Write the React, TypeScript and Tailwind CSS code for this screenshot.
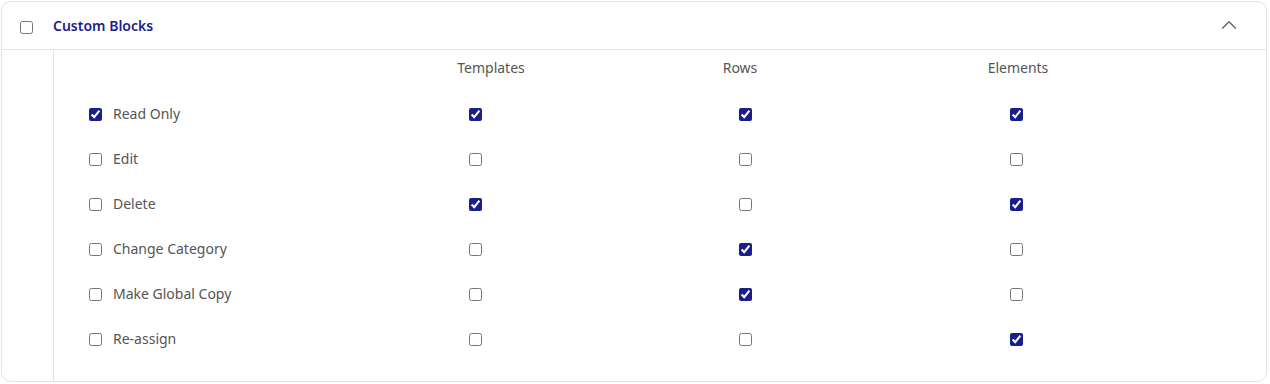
import { ChevronUp } from "lucide-react";

const columns = ["Templates", "Rows", "Elements"];

const permissions: { label: string; checked: boolean; values: boolean[] }[] = [
	{ label: "Read Only", checked: true, values: [true, true, true] },
	{ label: "Edit", checked: false, values: [false, false, false] },
	{ label: "Delete", checked: false, values: [true, false, true] },
	{ label: "Change Category", checked: false, values: [false, true, false] },
	{ label: "Make Global Copy", checked: false, values: [false, true, false] },
	{ label: "Re-assign", checked: false, values: [false, false, true] },
];

// per-column nudge of the checkbox relative to the centred header
const boxShift = ["mr-[32px]", "ml-[10px]", "mr-[4px]"];

const Box = ({ checked, className = "" }: { checked: boolean; className?: string }) => (
	<input
		type="checkbox"
		defaultChecked={checked}
		className={`m-0 h-[13px] w-[13px] accent-[#1a1d8c] ${className}`}
	/>
);

export default function App() {
	return (
		<div
			className="m-[1px] flex h-[381px] w-[1266px] flex-col rounded-[10px] border border-[#e3e3e3] bg-white text-[14px] text-[#555]"
			style={{ fontFamily: "'Noto Sans', 'Open Sans', sans-serif" }}
		>
			<div className="flex h-[48px] shrink-0 items-center border-b border-[#e3e3e3]">
				<div className="flex w-[51px] pl-[18px] pt-[4px]">
					<Box checked={false} />
				</div>
				<span className="text-[14px] font-semibold text-[#1b1e8a]">Custom Blocks</span>
				<ChevronUp size={26} strokeWidth={1} className="ml-auto mr-[24px] mb-[2px] text-[#555]" />
			</div>
			<div className="flex flex-1">
				<div className="w-[52px] border-r border-[#e3e3e3]" />
				<div className="flex-1 pb-[18px]">
					<div className="grid h-[42px] grid-cols-[346px_182px_316px_240px_1fr] pt-[8px]">
						<div />
						{columns.map(c => (
							<div key={c} className="text-center leading-[19px]">
								{c}
							</div>
						))}
					</div>
					{permissions.map(p => (
						<div key={p.label} className="grid h-[45px] grid-cols-[346px_182px_316px_240px_1fr] items-center">
							<div className="flex items-center gap-[11px] pl-[35px]">
								<Box checked={p.checked} />
								<span className="-mt-[2px]">{p.label}</span>
							</div>
							{p.values.map((v, i) => (
								<div key={i} className="flex justify-center">
									<Box checked={v} className={boxShift[i]} />
								</div>
							))}
						</div>
					))}
				</div>
			</div>
		</div>
	);
}
